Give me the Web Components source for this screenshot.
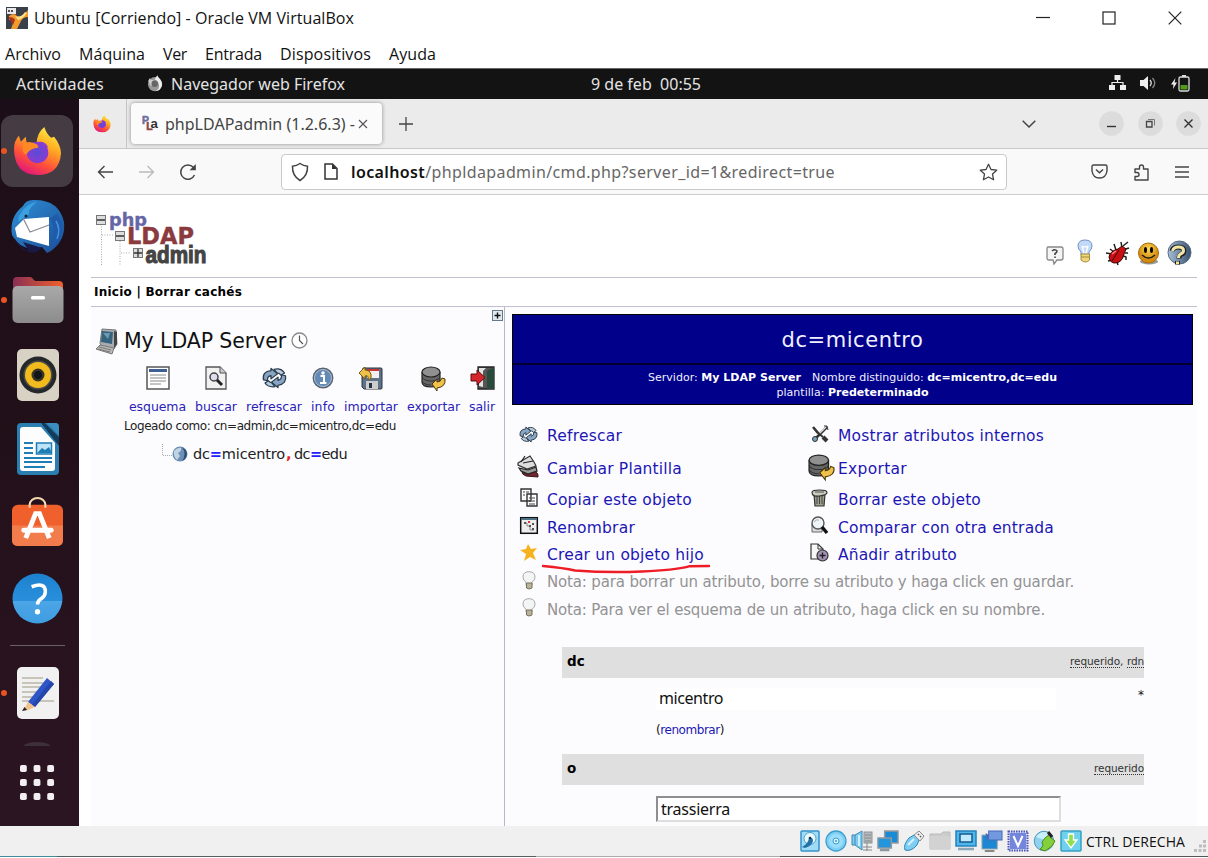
<!DOCTYPE html>
<html lang="es">
<head>
<meta charset="utf-8">
<title>Ubuntu [Corriendo] - Oracle VM VirtualBox</title>
<style>
html,body{margin:0;padding:0;background:#fff;overflow:hidden}
</style>
</head>
<body>
<vm-window></vm-window>
<script>
const ICONS = {
vbox:['0 0 22 22',`<rect width="22" height="22" fill="#39404a"/><path d="M3 9q5-4 8 0t11-6v7q-5 0-7 4t-4 8H5q2-6 3-8t-5-1z" fill="#f29a2e"/><path d="M9 9q6 2 10-4l2 1q-4 6-9 7z" fill="#fde08a"/><path d="M2 10q6 0 7 3l-2 5z" fill="#a9331d"/><rect x="1" y="1" width="9" height="6" fill="#e8e8ea"/><path d="M2 3h2v2H2zM5 3h2v2H5z" fill="#555"/>`],
min:['0 0 14 14','<path d="M0 6.500h14" stroke="#222" stroke-width="1.200"/>'],
max:['0 0 14 14','<rect x="1" y="1" width="12" height="12" fill="none" stroke="#222" stroke-width="1.2"/>'],
close:['0 0 14 14','<path d="M.7.7l12.6 12.6M13.3.7.7 13.3" stroke="#222" stroke-width="1.2"/>'],
foxgray:['0 0 50 52',`<circle cx="25" cy="28" r="22" fill="#999"/><path d="M4 18 8 10l5 5h8l-4 8q6 0 4 6-4 9-12 1z" fill="#ccc"/><path d="M24 14 32 1q3 7 9 12 10 12 4 24-6 12-18 12 14-7 10-21-4-12-13-14z" fill="#eee"/><circle cx="24" cy="27" r="10" fill="#666"/>`],
firefox:['0 0 50 52',`<defs><linearGradient id="f1" x1=".8" y1="0" x2=".3" y2="1"><stop offset="0" stop-color="#fff04a"/><stop offset=".35" stop-color="#ffae22"/><stop offset=".7" stop-color="#ff4f3a"/><stop offset="1" stop-color="#e0157d"/></linearGradient><radialGradient id="f2"><stop offset="0" stop-color="#5a4bd8"/><stop offset="1" stop-color="#8a3bd0"/></radialGradient></defs><path d="M1 24Q1 15 6 10l2 6 5-5 1 7 10 1Q24 7 32 1q2 7 7 11l3-1q7 9 7 17-2 22-24 22Q2 50 1 24z" fill="url(#f1)"/><circle cx="25" cy="27" r="11" fill="url(#f2)"/><path d="M10 18q7-4 15 1l1 3q-8 1-11 5-2 4-5-1z" fill="#ff8a25"/><path d="M24 17q8-3 12 5l-5-1z" fill="#8a3bd0"/>`],
pla:['0 0 18 20',`<g font-family="Liberation Sans" font-weight="bold"><text x="0" y="10.500" font-size="11" fill="#6d6d9e" stroke="#6d6d9e" stroke-width=".6">P</text><text x="4.500" y="17" font-size="11" fill="#8d4545" stroke="#8d4545" stroke-width=".6">L</text><text x="9" y="15" font-size="14" fill="#333">a</text></g>`],
x:['0 0 10 10','<path d="M1 1l8 8M9 1 1 9" stroke="#555" stroke-width="1.1"/>'],
plus:['0 0 14 14','<path d="M7 0v14M0 7h14" stroke="#444" stroke-width="1.3"/>'],
chev:['0 0 14 8','<path d="M.7.7 7 7 13.3.7" fill="none" stroke="#444" stroke-width="1.5"/>'],
wmin:['0 0 25 25','<circle cx="12.5" cy="12.5" r="12.3" fill="#dcdcdc"/><path d="M8 15.500h9" stroke="#333" stroke-width="1.400"/>'],
wmax:['0 0 25 25','<circle cx="12.500" cy="12.500" r="12.300" fill="#dcdcdc"/><path d="M8.500 10.500h5.500v5.500h-5.500z" fill="none" stroke="#444" stroke-width="1.300"/><path d="M10 8.500h6.500v6" fill="none" stroke="#777"/>'],
wclose:['0 0 25 25','<circle cx="12.5" cy="12.5" r="12.3" fill="#dcdcdc"/><path d="M8.5 8.5l8 8M16.5 8.5l-8 8" stroke="#333" stroke-width="1.4"/>'],
back:['0 0 17 14','<path d="M16 7H1.5M7.5 1l-6 6 6 6" fill="none" stroke="#444" stroke-width="1.4"/>'],
fwd:['0 0 17 14','<path d="M1 7h14.5M9.500 1l6 6-6 6" fill="none" stroke="#bbb" stroke-width="1.4"/>'],
reload:['0 0 18 18','<path d="M15.500 12A7.200 7.200 0 1 1 14.300 4.300L16 6" fill="none" stroke="#444" stroke-width="1.5"/><path d="M16.800 1v6.200h-6.200z" fill="#444"/>'],
shield:['0 0 18 20','<path d="M9 1.500Q12.500 4 16.500 4.200 17 13.500 9 18.500 1 13.500 1.500 4.200 5.500 4 9 1.500z" fill="none" stroke="#444" stroke-width="1.5"/>'],
page:['0 0 14 17','<path d="M1 1h7.500l4.500 4.500V16H1z" fill="none" stroke="#333" stroke-width="1.500"/><path d="M8 1l5 5H8z" fill="#333"/>'],
star:['0 0 19 18','<path d="M9.500 1.300l2.500 5.200 5.700.7-4.200 3.900 1.100 5.700-5.100-2.800-5.100 2.800 1.100-5.700L1.300 7.200 7 6.500z" fill="none" stroke="#444" stroke-width="1.300" stroke-linejoin="round"/>'],
pocket:['0 0 17 15','<path d="M2.500 1h12q1.500 0 1.500 1.500V7q-1 7-7.500 7T1 7V2.500Q1 1 2.500 1z" fill="none" stroke="#444" stroke-width="1.400"/><path d="M5 5.500l3.500 3.300L12 5.500" fill="none" stroke="#444" stroke-width="1.500"/>'],
ext:['0 0 17 18','<path d="M2 6h4.500V4a2 2 0 0 1 4 0v2H15v11H2v-3.500h2a2 2 0 0 0 0-4H2z" fill="none" stroke="#444" stroke-width="1.400" stroke-linejoin="round"/>'],
burger:['0 0 14 12','<path d="M0 1h14M0 6h14M0 11h14" stroke="#444" stroke-width="1.400"/>'],
net:['0 0 17 16','<path d="M5.500 0h6v5h-6zM0 10h6v5H0zM11 10h6v5h-6z" fill="#eee"/><path d="M8.500 5v3M3 10V7.500h11V10" fill="none" stroke="#eee" stroke-width="1.200"/>'],
vol:['0 0 17 16','<path d="M0 5h3.500L8 1v14l-4.500-4H0z" fill="#eee"/><path d="M10 5q2.500 3 0 6" fill="none" stroke="#ddd" stroke-width="1.300"/><path d="M12.500 3q4.500 5 0 10" fill="none" stroke="#888" stroke-width="1.300"/>'],
batt:['0 0 19 17','<path d="M4.500 3 0 9.500h2.500L2 14l4-6.500H3.500z" fill="#eee"/><rect x="8" y="2" width="10" height="14" rx="1.500" fill="none" stroke="#ddd" stroke-width="1.300"/><path d="M11 0h4v2h-4z" fill="#ddd"/><path d="M9.500 10h7v4.500h-7z" fill="#4e9a1c"/>'],
tbird:['0 0 54 54',`<defs><linearGradient id="t1" x1="0" y1="0" x2="1" y2="1"><stop offset="0" stop-color="#2f8fd6"/><stop offset="1" stop-color="#1b4d96"/></linearGradient></defs><path d="M1 36Q-2 18 12 7 15 0 24 1q24 0 29 22 2 18-13 29l-4 2-5-6q-20 6-30-12z" fill="url(#t1)"/><path d="M4 29l9-9 25-2v29L6 38z" fill="#fff"/><path d="M12 19l7 14 19-7" fill="none" stroke="#8a8a90" stroke-width="1.200"/><path d="M10 14Q16 4 26 3q-9 6-8 12-6 3-10 8-2-4 2-9z" fill="#3aa0e0"/><path d="M3 38q5 10 15 14l-6-9 19 6q-6 6-13 4Q6 49 3 38z" fill="#191a45"/><path d="M38 20q8 6 2 28l10-10q4-13-4-23z" fill="#1e5bab"/><path d="M45 22q5 8 1 18" fill="none" stroke="#3f94da" stroke-width="1.500"/><circle cx="15" cy="17" r="1.500" fill="#123"/>`],
files:['0 0 52 48',`<defs><linearGradient id="g1"><stop offset="0" stop-color="#8a2f55"/><stop offset="1" stop-color="#f0612c"/></linearGradient><linearGradient id="g2" x1="0" y1="0" x2="0" y2="1"><stop offset="0" stop-color="#a9a9a9"/><stop offset="1" stop-color="#8c8c8c"/></linearGradient></defs><path d="M5 1h13q2 0 3 2l2 2h24q4 0 4 4v15H1V5q0-4 4-4z" fill="url(#g1)"/><rect x=".5" y="10" width="51" height="37" rx="5" fill="url(#g2)"/><rect x="19" y="20" width="14" height="3.500" rx="1.500" fill="#fff"/>`],
rhythm:['0 0 42 52',`<rect width="42" height="52" rx="5" fill="#d8d2c4"/><circle cx="21" cy="26" r="18.500" fill="#25282b"/><circle cx="21" cy="26" r="14.500" fill="#4a4a48"/><circle cx="21" cy="26" r="13" fill="#f2bb1d"/><circle cx="21" cy="26" r="6.500" fill="#3a3424"/><circle cx="21" cy="26" r="4" fill="#10151c"/>`],
writer:['0 0 42 52',`<rect width="42" height="52" rx="4" fill="#2a7fb0"/><path d="M3 7q0-3 3-3h18l14 16v25q0 3-3 3H6q-3 0-3-3z" fill="#fdfdfd"/><path d="M24 0h4l14 14v9z" fill="#113c5c"/><path d="M30 0h8q4 0 4 4v8z" fill="#3a8fc0"/><path d="M7 20h9M7 25h9M7 30h9M7 35h28M7 39h28M7 44h21" stroke="#1e7db4" stroke-width="2"/><rect x="19.500" y="20" width="15" height="11" fill="#bfe3f6" stroke="#1e7db4" stroke-width="1.500"/><path d="M20 30l5-5 3 2 4-3 3 6z" fill="#1e7db4"/>`],
soft:['0 0 52 50',`<rect y="8" width="52" height="42" rx="6" fill="#f0602c"/><path d="M0 29h52v15q0 6-6 6H6q-6 0-6-6z" fill="#f37c4c"/><path d="M18 11V8a8 7 0 0 1 16 0v3" fill="none" stroke="#f3d8b0" stroke-width="2.200"/><path d="M14 42 24 17h4l10 25" fill="none" stroke="#fff" stroke-width="5"/><path d="M12 34h28" stroke="#fff" stroke-width="5" stroke-linecap="round"/>`],
help:['0 0 52 52',`<defs><linearGradient id="h1" x1="0" y1="0" x2="0" y2="1"><stop offset="0" stop-color="#1c82d0"/><stop offset=".54" stop-color="#2a8fdb"/><stop offset=".55" stop-color="#4ba5e6"/><stop offset="1" stop-color="#3f9de2"/></linearGradient></defs><circle cx="26" cy="26" r="25.500" fill="url(#h1)"/><path d="M20 14q14-5 14 5 0 4-4 7-4 2.500-4 6" fill="none" stroke="#fff" stroke-width="3.600"/><circle cx="26" cy="39.500" r="2.700" fill="#fff"/>`],
editor:['0 0 42 52',`<rect width="42" height="52" rx="5" fill="#f1f1f1"/><path d="M5 11h21M5 16h22M5 20h20M5 25h16M5 30h11M5 34h32" stroke="#c9c4b8" stroke-width="1.800"/><path d="M11 35 30 11l7 6-19 23z" fill="#2f56c8"/><path d="M15 38 34 14l3 3-19 23z" fill="#2547ab"/><path d="M11 35l7 5-10 4z" fill="#f1c38b"/><path d="M11 35l2 7-7 2z" fill="#f1c38b"/><path d="M7.500 40 5 44l5-1z" fill="#222"/>`],
apps:['0 0 36 36',[0,14,28].map(y=>[0,14,28].map(x=>`<rect x="${x}" y="${y}" width="7" height="7" rx="1.800" fill="#f2eef1"/>`).join('')).join('')],
logo:['0 0 116 64',`<path d="M6.500 15v41M25 32v24M7 26h12M26 44h10" stroke="#aaa" stroke-dasharray="1 1.500" fill="none"/><g fill="#ddd" stroke="#777"><rect x="1.500" y="6.500" width="9" height="9"/><rect x="20.500" y="22.500" width="9" height="9"/><rect x="38.500" y="39.500" width="9" height="9"/></g><path d="M2 11h8M21 27h8M39 44h8M43 40v8" stroke="#333" stroke-width="1.300"/><g font-weight="bold"><text x="14" y="16.500" font-family="DejaVu Sans" font-size="18.500" textLength="38" lengthAdjust="spacingAndGlyphs" fill="#6666a6" stroke="#6666a6" stroke-width=".4">php</text><text x="32" y="35" font-family="DejaVu Sans" font-size="23.500" textLength="67" lengthAdjust="spacingAndGlyphs" fill="#8b3a3e" stroke="#8b3a3e" stroke-width=".4">LDAP</text><text x="50.500" y="54" font-family="Liberation Sans" font-size="24" textLength="61" lengthAdjust="spacingAndGlyphs" fill="#444" stroke="#444" stroke-width="1.100">admin</text></g>`],
req:['0 0 18 20','<path d="M2 1h13q2 0 2 2v9q0 2-2 2h-4l-3 4-1-4H3q-2 0-2-2V3q0-2 1-2z" fill="#f4f4f4" stroke="#888" stroke-width="1.300"/><path d="M6 5q3-2.500 5 0 0 2-2 2.500v1.500M9 10.500v1.500" fill="none" stroke="#444" stroke-width="1.600"/>'],
bulb:['0 0 16 25','<path d="M8 1q7 0 7 6 0 3-3 6v3H4v-3Q1 10 1 7q0-6 7-6z" fill="#c2daf8" stroke="#7191c4"/><path d="M5 7l2 7M11 7l-2 7M5 7q3 2 6 0" stroke="#fff" fill="none" stroke-width="1.400"/><path d="M4 15h8.500v6q-4 4-8.500 0z" fill="#eed77c" stroke="#a78a3a"/><path d="M4 18h8" stroke="#a78a3a"/>'],
bug:['0 0 25 25','<path d="M1 12l6 1M3 20l5-1 1 3M9 3l2 6M16 1l1 6M18 5l5-4M17 9l7-2M16 14l5 2v3M12 21l1 3M5 8l4 3M20 12h3" stroke="#222" stroke-width="1.500" fill="none"/><path d="M4 16q1-6 9-8l4-3 4 3-2 5q-2 9-9 9-5 0-6-6z" fill="#c80f14" stroke="#3a0306"/><path d="M14 9l-7 11" stroke="#3a0306"/><path d="M7 13l4-3" stroke="#ff8080" stroke-width="1.500"/>'],
smile:['0 0 23 23','<defs><radialGradient id="s1" cy=".3"><stop offset="0" stop-color="#ffd84f"/><stop offset="1" stop-color="#d58b10"/></radialGradient></defs><ellipse cx="12" cy="19.500" rx="9" ry="3" fill="#999"/><circle cx="11.500" cy="11" r="10" fill="url(#s1)" stroke="#a56c10"/><ellipse cx="8.500" cy="8" rx="1.500" ry="3"/><ellipse cx="14.500" cy="8" rx="1.500" ry="3"/><path d="M5 13q6.500 6 13 0" stroke="#222" stroke-width="1.500" fill="none"/>'],
qhelp:['0 0 25 26','<defs><linearGradient id="q1"><stop offset="0" stop-color="#a8bfd9"/><stop offset="1" stop-color="#38506e"/></linearGradient></defs><circle cx="12.500" cy="12.500" r="11.500" fill="url(#q1)" stroke="#566b84"/><path d="M5 11q1-4 6.500-4t5.500 4q0 2.500-3 3.500-2 1-2 4M10.500 21v3.500" fill="none" stroke="#222" stroke-width="5"/><path d="M5.500 11q1-4 6-4t5 3.500q0 2.500-3 3.500-2 1-2 4M10.500 21.500v2.500" fill="none" stroke="#f1e7a8" stroke-width="3"/>'],
exp:['0 0 11 11','<rect x=".5" y=".5" width="10" height="10" fill="#dfe9ee" stroke="#68798a"/><path d="M5.500 2.500v6M2.500 5.500h6" stroke="#111" stroke-width="1.400"/>'],
pc:['0 0 24 27','<path d="M7 1l14 1 1 14-3 5-13-3-1-3z" fill="#a9adb0" stroke="#777"/><path d="M7 3l11 1-1 12-11-2z" fill="#35627d"/><path d="M8 5l7 0-2 6z" fill="#6d9ab1"/><path d="M19 3l3 1v12l-3 4z" fill="#444"/><path d="M5 17l14 3-2 6L1 21z" fill="#b9bab7" stroke="#777"/><path d="M4 19l12 3M3 21l12 3" stroke="#777"/>'],
clock:['0 0 17 17','<circle cx="8.500" cy="8.500" r="7.500" fill="#fff" stroke="#888" stroke-width="1.300"/><path d="M8.500 3.500v5l3.500 3.500" stroke="#555" fill="none" stroke-width="1.200"/>'],
schema:['0 0 24 24','<rect x="1" y="1" width="22" height="22" fill="#fff" stroke="#555" stroke-width="1.500"/><path d="M3 4.500h18" stroke="#3d5f96" stroke-width="3"/><path d="M4 9h16M4 12h16M4 15h16M4 18h11" stroke="#888"/>'],
search:['0 0 22 24','<path d="M1 1h14l6 6v16H1z" fill="#f1f1f1" stroke="#555" stroke-width="1.300"/><path d="M15 1v6h6" fill="#ccc" stroke="#555"/><circle cx="9" cy="11" r="4" fill="#dde" stroke="#444" stroke-width="1.500"/><path d="M12 14l5 5" stroke="#222" stroke-width="3"/>'],
refresh:['0 0 25 24','<g fill="#88a5c3" stroke="#2a3b4d" stroke-width="1.300" stroke-linejoin="round"><path d="M1.500 14Q0 5 9 4V1.500l6.500 6L9 13v-3.500Q5 10 5.500 15z"/><path d="M23.500 9.500q1.500 9-7.500 10.500v2.500l-6.500-6L16 11v3.500q4-.5 3.500-6z"/><path d="M12 2.500q7-2 10.500 4l-3.500 2.500q-1.500-2.500-4-2.500zM13 21.500q-7 1-10-4l3.500-2.500q1.500 2 3.500 2.500z" fill="#b9cbdc"/></g>'],
info:['0 0 22 22','<circle cx="11" cy="11" r="9.700" fill="#6489b5" stroke="#5d646d" stroke-width="1.500"/><circle cx="11" cy="11" r="8.500" fill="none" stroke="#a6bed9"/><circle cx="11" cy="6" r="1.700" fill="#fff"/><path d="M8.500 9h3.500v7M8 16h6.500" stroke="#fff" stroke-width="2" fill="none"/>'],
imp:['0 0 24 24','<path d="M4 2h18q1 0 1 1v19q0 1-1 1H5l-2-2V8z" fill="#5d7288" stroke="#2b3440"/><rect x="8" y="3" width="12" height="9" fill="#f5eeee"/><path d="M8 4h12" stroke="#c33" stroke-width="2"/><rect x="7" y="15" width="12" height="8" fill="#ccc"/><rect x="10" y="17" width="3" height="5" fill="#234"/><path d="M0 7 6 1v3q7 0 6 8-1 2-3 1 1-4-3-3v3z" fill="#edc04a" stroke="#7a5910"/>'],
db:['0 0 25 25','<path d="M1 6v10q0 5 9 5t9-5V6" fill="#666" stroke="#222" stroke-width="1.200"/><ellipse cx="10" cy="6" rx="9" ry="5" fill="#909090" stroke="#222" stroke-width="1.200"/><path d="M1 11q2 4 9 4t9-4M1 15q2 4 9 4" stroke="#333" fill="none"/><path d="M11 18l5-5v3q4 0 5-4l3 1q1 8-8 9v3z" fill="#f0c24a" stroke="#4a3508"/>'],
exit:['0 0 25 24','<path d="M8 1h16v22H8z" fill="#555" stroke="#222" stroke-width="1.300"/><path d="M17 5l7-4v22h-7z" fill="#294a3b"/><path d="M9 2h7l-3 3v16l-4-1z" fill="#e2e2e2"/><path d="M1 8h6V4l8 7.500L7 19v-4H1z" fill="#d3252b" stroke="#5d0b0e"/>'],
globe:['0 0 16 16','<circle cx="8" cy="8" r="7.500" fill="#6c8fb5"/><path d="M2 5q4-4 7-3 1 3-3 5l2 3-3 4q-4-4-3-9z" fill="#c1d4e3"/><path d="M10 1q8 5 3 12l-3 2q5-7 0-14z" fill="#304d70"/>'],
tree:['0 0 10 12','<path d="M.5 0v11.500H10" fill="none" stroke="#aaa" stroke-dasharray="1 1"/>'],
tools:['0 0 18 18','<path d="M2 2l5 6M16 2 4 14" stroke="#333" stroke-width="2.600"/><path d="M12 12l4 4" stroke="#333" stroke-width="4"/><path d="M15 2 8 9" stroke="#ddd" stroke-width="1.200"/><circle cx="4" cy="14" r="2.500" fill="#79a1bb" stroke="#333"/><path d="M6 7l6 5" stroke="#333" stroke-width="2"/><path d="M13 1h3l1 4" fill="none" stroke="#333"/>'],
swiss:['0 0 23 24','<path d="M5 16h13q4 3 3 6l-12-1q-5-2-4-5z" fill="#742532" stroke="#3a141c"/><path d="M1 8 13 1l4 6 2 4-9 3-9-4z" fill="#ddd" stroke="#333" stroke-width="1.200"/><path d="M2 13l9 2 8-3 1 4-9 3-7-3zM6 8l10-2M8 1l-4 6" fill="#999" stroke="#222" stroke-width="1.200"/>'],
copy:['0 0 18 19','<path d="M1 1h10v12H1zM7 6h10v12H7z" fill="#fff" stroke="#333" stroke-width="1.400"/><path d="M3 4h2M6 4h3M3 7h2M9 10h2M12 10h3M9 13h2M12 13h3M9 16h6" stroke="#444" stroke-width="1.200"/>'],
ren:['0 0 18 17','<rect x=".7" y=".7" width="16.600" height="15.600" fill="#eee" stroke="#111" stroke-width="1.500"/><path d="M1 2h16" stroke="#4d7186" stroke-width="2"/><path d="M5 6h2M7 6v3h3v4h4" stroke="#888" fill="none"/><path d="M4 5h2v2H4zM9 8h2v2H9zM12 6h2v2h-2zM12 11h2v2h-2z" fill="#555"/><path d="M8 4h2v2H8z" fill="#d33"/>'],
gold:['0 0 18 17','<path d="M8 0l3 5 6-1-4 5 3 7-6-3-6 4 2-7-6-4 6-1z" fill="#f6b31f"/>'],
lamp:['0 0 14 19','<path d="M7 .7q6 0 6 5.500 0 3-3 5v3H4v-3Q1 9.500 1 6q0-5.300 6-5.300z" fill="#f3f4f4" stroke="#aaa"/><path d="M4.500 12h5.500v5q-3 2-5.500 0z" fill="#b8b39a" stroke="#77705a"/>'],
trash:['0 0 17 18','<path d="M3 5h11l-1 12H4z" fill="#9da08f" stroke="#333" stroke-width="1.200"/><path d="M6 7v8M8.500 7v8M11 7v8" stroke="#444"/><path d="M1 3.500Q1 1 8.500 1T16 3.500 8.500 7 1 3.500z" fill="#c9cbbc" stroke="#333" stroke-width="1.200"/><path d="M4 3h9" stroke="#555"/>'],
cmp:['0 0 19 19','<path d="M2 8h10v8H2z" fill="#ddd" stroke="#666"/><circle cx="8" cy="7" r="6" fill="#eef4f8" stroke="#555" stroke-width="1.400"/><path d="M4 6q2-3 5-2" stroke="#aaa" fill="none"/><path d="M12 11l5 6" stroke="#111" stroke-width="3.400"/>'],
add:['0 0 19 19','<path d="M1 1h7l5 5v10H1z" fill="#f7f7f7" stroke="#333" stroke-width="1.200"/><path d="M8 1v5h5" fill="none" stroke="#333"/><circle cx="12.500" cy="12.500" r="5.500" fill="#a391b4" stroke="#333" stroke-width="1.200"/><path d="M12.500 9.500v6M9.500 12.500h6" stroke="#222" stroke-width="1.400"/>'],
hdd:['0 0 22 22','<rect x="2" y="1" width="18" height="20" rx="1" fill="#9fdcf8" stroke="#3391c9" stroke-width="1.500"/><circle cx="11" cy="8.500" r="6" fill="#e7f8ff" stroke="#4d9fc9"/><path d="M10 8q4-1 4 3-1 5-8 7l-3-1q6-3 7-9z" fill="#2670a8"/><circle cx="11" cy="8" r="1.300" fill="#134"/>'],
cd:['0 0 22 22','<circle cx="11" cy="11" r="10" fill="#7fd0f5" stroke="#3d9ecf" stroke-width="1.300"/><circle cx="11" cy="11" r="7" fill="#9cdef9"/><circle cx="11" cy="11" r="3" fill="#d8f2fd" stroke="#3d9ecf"/><circle cx="11" cy="11" r="1" fill="#3d9ecf"/>'],
aud:['0 0 22 22','<rect x="13" y="2" width="8" height="11" fill="#b4b9bc" stroke="#8d9499"/><path d="M14 5h6M14 8h6M14 11h6M12 17h9M12 20h9M16 13v8" stroke="#888"/><path d="M1 5h3L11 1v19l-7-5H1z" fill="#7cccf2" stroke="#3e89b5"/><path d="M4 5v10" stroke="#3e89b5"/><path d="M8 5v11" stroke="#cdeefd" stroke-width="2"/>'],
net2:['0 0 23 22','<path d="M8 1h14v12H8z" fill="#1b8ad4" stroke="#999" stroke-width="1.500"/><path d="M1 8h14v10H1z" fill="#2395dd" stroke="#8f989e" stroke-width="1.500"/><path d="M3 20h10" stroke="#8f989e" stroke-width="2.500"/>'],
usb:['0 0 22 22','<path d="M2 20q-2-5 4-12l5-3 5 5-2 5Q8 22 2 20z" fill="#7fcdf2" stroke="#2d88b7"/><path d="M11 5l5-4 5 5-4 5z" fill="#eee" stroke="#888"/><path d="M15 4l1 1M18 6l-1 1" stroke="#555" stroke-width="1.500"/><path d="M5 15l6-6" stroke="#d9f3ff" stroke-width="2"/>'],
folder:['0 0 22 22','<path d="M1 4h11l2-2h7v17H1z" fill="#ccc" stroke="#bbb"/><path d="M1 6h20v13H1z" fill="#d2d2d2"/>'],
disp:['0 0 22 22','<rect x="1" y="1" width="20" height="15" fill="#4eb7ee" stroke="#2381bb" stroke-width="1.500"/><rect x="5" y="4" width="12" height="8" fill="#bfe9ff" stroke="#165b8a" stroke-width="1.500"/><path d="M3 19h16" stroke="#8ba7b8" stroke-width="2.500"/>'],
rec:['0 0 23 22','<path d="M1 5h16v14H1z" fill="#1e87d4" stroke="#9aa"/><path d="M4 21h10" stroke="#888" stroke-width="2"/><rect x="8" y="1" width="14" height="9" fill="#7298e0" stroke="#4b69b8"/><path d="M5 3l3 2v3L5 9z" fill="#4b69b8"/>'],
cpu:['0 0 22 22','<rect x="1.500" y="1.500" width="19" height="19" fill="#d7dcff" stroke="#4b55b0" stroke-width="2" stroke-dasharray="1.500 1"/><rect x="3" y="3" width="16" height="16" fill="#7486dc"/><path d="M6.500 6 11 16l4.500-10" fill="none" stroke="#fff" stroke-width="2"/>'],
mouse:['0 0 23 22','<circle cx="11" cy="11" r="9.700" fill="#8fd2ef" stroke="#4d96b6"/><path d="M3 7q5-7 13-4l-4 7z" fill="#c9effc"/><path d="M12 8l5-4 1 4 4 3-3 5-7 5-5-2 3-3-1-4z" fill="#86cf3c" stroke="#498f1a"/><path d="M15 2l4 5" stroke="#222" stroke-width="3"/>'],
kbd:['0 0 22 22','<rect x="1" y="1" width="20" height="20" rx="1" fill="#6fd1ee" stroke="#3aa0c4" stroke-width="1.500"/><path d="M8.500 4h5v6H17l-6 8-6-8h3.500z" fill="#8ee04a" stroke="#fff" stroke-width="1.300"/>'],
grip:['0 0 12 12','<path d="M9 0h3v3H9zM5 4.500h3v3H5zM9 4.500h3v3H9zM0 9h3v3H0zM4.500 9h3v3h-3zM9 9h3v3H9z" fill="#bdbdbd"/>'],
stroke:['0 0 168 10','<path d="M1 2Q22 4 33 6.500 66 9 100 7.500 132 6 147 2.300L167 2" fill="none" stroke="#ee1c24" stroke-width="2.400" stroke-linecap="round"/>']
};
const fits = [];
class SvgIcon extends HTMLElement{
  connectedCallback(){
    if(this.shadowRoot) return;
    const [vb,body]=ICONS[this.getAttribute('name')];
    const w=this.getAttribute('w')||vb.split(' ')[2], h=this.getAttribute('h')||vb.split(' ')[3];
    this.attachShadow({mode:'open'}).innerHTML=`<style>:host{display:block;flex:none;width:${w}px;height:${h}px}svg{display:block;overflow:visible}</style><svg width="${w}" height="${h}" viewBox="${vb}" preserveAspectRatio="none" aria-hidden="true">${body}</svg>`;
  }
}
/* Single-line label that spreads its glyphs evenly over a given width. */
class FitText extends HTMLElement{
  connectedCallback(){
    if(this.shadowRoot) return;
    const w=this.getAttribute('w');
    this.attachShadow({mode:'open'}).innerHTML=`<style>:host{display:block;flex:none;width:${w}px;white-space:pre}span{display:inline-block}</style><span><slot></slot></span>`;
    fits.push(this);
  }
  fit(){
    const s=this.shadowRoot.querySelector('span'), n=this.textContent.length;
    const d=(this.getAttribute('w')-s.getBoundingClientRect().width)/n;
    this.style.letterSpacing=d.toFixed(3)+'px';
  }
}
function define(name,html){
  const t=document.createElement('template');t.innerHTML=html;
  customElements.define(name,class extends HTMLElement{
    connectedCallback(){
      if(this.shadowRoot) return;
      this.attachShadow({mode:'open'}).append(t.content.cloneNode(true));
    }
  });
}
customElements.define('svg-icon',SvgIcon);
customElements.define('fit-text',FitText);

define('title-bar',`<style>:host{display:flex;height:36px;align-items:center;box-sizing:border-box;padding:0 26px 0 6px;font:16px "Open Sans",sans-serif;color:#111}
fit-text{margin-left:6px}.b{display:flex;margin-left:auto;gap:52px}</style>
<svg-icon name="vbox"></svg-icon><fit-text w="320">Ubuntu [Corriendo] - Oracle VM VirtualBox</fit-text>
<div class="b"><svg-icon name="min"></svg-icon><svg-icon name="max"></svg-icon><svg-icon name="close"></svg-icon></div>`);

define('menu-bar',`<style>:host{display:flex;height:32px;align-items:center;padding:4px 5px 0;box-sizing:border-box;gap:18px;font:16px "Open Sans",sans-serif;color:#111}</style>
<fit-text w="56">Archivo</fit-text><fit-text w="66">Máquina</fit-text><fit-text w="24">Ver</fit-text><fit-text w="57">Entrada</fit-text><fit-text w="91">Dispositivos</fit-text><fit-text w="47">Ayuda</fit-text>`);

define('top-panel',`<style>:host{display:grid;grid-template-columns:591px 1fr auto;height:31px;align-items:center;background:#131313;border-top:1px solid #666;box-sizing:border-box;font:16px "Noto Sans",sans-serif;color:#e4e4e4;padding-right:18px}
div{display:flex;align-items:center}.l{padding-left:16px}.l svg-icon{margin:-2px 8px 0 43px}.r{gap:14px;margin-top:-2px}</style>
<div class="l"><fit-text w="88">Actividades</fit-text><svg-icon name="foxgray" w="16" h="17"></svg-icon><fit-text w="174">Navegador web Firefox</fit-text></div>
<div><fit-text w="110">9 de feb  00:55</fit-text></div>
<div class="r"><svg-icon name="net"></svg-icon><svg-icon name="vol"></svg-icon><svg-icon name="batt"></svg-icon></div>`);

define('dock-item',`<style>:host{display:flex;position:relative;width:75px;height:74.500px;align-items:center;justify-content:center}
:host([active])::before{content:"";position:absolute;z-index:0;left:1px;top:1px;width:72px;height:72px;border-radius:12px;background:#453b43}
:host([running])::after{content:"";position:absolute;left:1px;top:34px;width:6px;height:6px;border-radius:50%;background:#e95420}
::slotted(*){position:relative}</style><slot></slot>`);

define('app-dock',`<style>:host{display:flex;flex-direction:column;width:79px;flex:none;background:linear-gradient(#1c0e19,#221019 45%,#2c1523);box-sizing:border-box;padding-top:15px;overflow:hidden}
.s{width:55px;height:1px;margin:9px 0 10px 10px;background:#6c5f68}.c{width:26px;height:4px;margin:12px 0 19px 24px;border-radius:50% 50% 0 0/100% 100% 0 0;background:#3d3039}.a{margin-left:20px}.up{margin-bottom:5px}</style>
<dock-item active running><svg-icon name="firefox" w="49" h="51"></svg-icon></dock-item>
<dock-item><svg-icon name="tbird"></svg-icon></dock-item>
<dock-item running><svg-icon name="files"></svg-icon></dock-item>
<dock-item><svg-icon name="rhythm"></svg-icon></dock-item>
<dock-item><svg-icon name="writer"></svg-icon></dock-item>
<dock-item><svg-icon class="up" name="soft" w="51" h="49"></svg-icon></dock-item>
<dock-item><svg-icon name="help" w="51" h="51"></svg-icon></dock-item>
<div class="s"></div>
<dock-item running><svg-icon name="editor"></svg-icon></dock-item>
<div class="c"></div><svg-icon class="a" name="apps" w="35" h="36"></svg-icon>`);

define('tab-strip',`<style>:host{display:flex;height:50px;flex:none;align-items:center;background:#ebebeb;border-bottom:1px solid #c8c8c8;box-sizing:border-box;font:16px "Noto Sans",sans-serif;color:#444}
.p{width:48px;height:49px;box-sizing:border-box;border-right:1px solid #c6c6c6;display:flex;align-items:center;padding-left:14px}
.t{width:251px;height:41px;margin:0 17px 0 4px;background:#fbfbfb;border-radius:4px;box-shadow:0 0 4px rgba(0,0,0,.4);display:flex;align-items:center;box-sizing:border-box;padding-left:11px}
.t fit-text{margin:0 3px 0 6px}.r{display:flex;align-items:center;margin:0 7px 0 auto;gap:13.500px}.r :first-child{margin-right:50px}</style>
<div class="p"><svg-icon name="firefox" w="18" h="18"></svg-icon></div>
<div class="t"><svg-icon name="pla" w="17" h="19"></svg-icon><fit-text w="190">phpLDAPadmin (1.2.6.3) -</fit-text><svg-icon name="x"></svg-icon></div>
<svg-icon name="plus"></svg-icon>
<div class="r"><svg-icon name="chev"></svg-icon><svg-icon name="wmin"></svg-icon><svg-icon name="wmax"></svg-icon><svg-icon name="wclose"></svg-icon></div>`);

define('nav-bar',`<style>:host{display:flex;height:46px;flex:none;align-items:center;background:#f9f9fa;border-bottom:1px solid #ccc;box-sizing:border-box;padding:0 19px 0 18px;font:16px "Noto Sans",sans-serif;color:#666}
.b{display:flex;gap:24px;align-items:center}.u{display:flex;align-items:center;box-sizing:border-box;width:726px;height:36px;margin:0 auto 0 84px;border:1px solid #c9c9cc;border-radius:4px;background:#fff;padding:0 8px 0 9px}
b{color:#111;font-weight:600}.u fit-text{margin:0 auto 0 13px}.r{display:flex;gap:25px;align-items:center}.p{margin-left:15px}</style>
<div class="b"><svg-icon name="back"></svg-icon><svg-icon name="fwd"></svg-icon><svg-icon name="reload"></svg-icon></div>
<div class="u"><svg-icon name="shield"></svg-icon><svg-icon class="p" name="page"></svg-icon><fit-text w="484"><b>localhost</b>/phpldapadmin/cmd.php?server_id=1&amp;redirect=true</fit-text><svg-icon name="star"></svg-icon></div>
<div class="r"><svg-icon name="pocket"></svg-icon><svg-icon name="ext"></svg-icon><svg-icon name="burger"></svg-icon></div>`);

define('page-header',`<style>:host{display:block;margin:0 11px 0 12px;font:bold 12px "DejaVu Sans",sans-serif;color:#000}
.h{display:flex;height:82px;box-sizing:content-box;border-bottom:1px solid #c0c0cf;padding-left:4px}.h>:first-child{margin-top:14px}
.i{display:flex;align-items:center;gap:7px;margin:33px 5px 0 auto;height:50px}.i :first-child{margin-top:5px;margin-right:2px}.i :nth-child(2){margin:-3px 5px 0 4px}</style>
<style>.m{display:flex;align-items:center;height:28px;border-bottom:1px solid #c0c0cf;padding-left:3px}</style>
<div class="h"><svg-icon name="logo"></svg-icon><div class="i"><svg-icon name="req"></svg-icon><svg-icon name="bulb"></svg-icon><svg-icon name="bug"></svg-icon><svg-icon name="smile"></svg-icon><svg-icon name="qhelp"></svg-icon></div></div>
<div class="m"><fit-text w="148">Inicio | Borrar cachés</fit-text></div>`);

define('tool-link',`<style>:host{display:flex;flex-direction:column;align-items:center;gap:9px;flex:none;color:#2a22b8}.i{height:24px;display:flex;align-items:center}</style>
<div class="i"><slot name="icon"></slot></div><slot></slot>`);

define('server-pane',`<style>:host{display:block;width:413px;flex:none;background:#fcfcff;border-right:1px solid #b7b7ca;box-sizing:content-box;font:12.500px/15px "DejaVu Sans",sans-serif;color:#222}
.e{display:flex;justify-content:flex-end;padding:3px 1px 0 0}.t{display:flex;align-items:center;height:30px;margin:5px 0 0 4px;font-size:20.500px;line-height:24px;color:#111}.t fit-text{margin:-1px 5px 0 5px}.t :last-child{margin-top:-2px}
.k{display:flex;gap:9px;margin:10px 0 0 38px}.l{margin:5px 0 0 33px;font-size:12px}
.d{display:flex;align-items:center;margin:9px 0 0 71px;height:22px;font-size:14.500px}.d fit-text{margin-left:5px}.d svg-icon:first-child{margin-top:-8px}i{font-style:normal;font-weight:bold;color:#22f}u{text-decoration:none;color:#e22;font-weight:bold}</style>
<div class="e"><svg-icon name="exp"></svg-icon></div>
<div class="t"><svg-icon name="pc"></svg-icon><fit-text w="162">My LDAP Server</fit-text><svg-icon name="clock"></svg-icon></div>
<div class="k">
<tool-link><svg-icon slot="icon" name="schema"></svg-icon><fit-text w="57">esquema</fit-text></tool-link>
<tool-link><svg-icon slot="icon" name="search"></svg-icon><fit-text w="42">buscar</fit-text></tool-link>
<tool-link><svg-icon slot="icon" name="refresh" w="25" h="22"></svg-icon><fit-text w="56">refrescar</fit-text></tool-link>
<tool-link><svg-icon slot="icon" name="info"></svg-icon><fit-text w="24">info</fit-text></tool-link>
<tool-link><svg-icon slot="icon" name="imp"></svg-icon><fit-text w="54">importar</fit-text></tool-link>
<tool-link><svg-icon slot="icon" name="db"></svg-icon><fit-text w="53">exportar</fit-text></tool-link>
<tool-link><svg-icon slot="icon" name="exit"></svg-icon><fit-text w="26">salir</fit-text></tool-link></div>
<div class="l"><fit-text w="272">Logeado como: cn=admin,dc=micentro,dc=edu</fit-text></div>
<div class="d"><svg-icon name="tree"></svg-icon><svg-icon name="globe"></svg-icon><fit-text w="92">dc<i>=</i>micentro</fit-text><fit-text style="margin-left:1px" w="7"><u>,</u></fit-text><fit-text style="margin-left:1px" w="53">dc<i>=</i>edu</fit-text></div>`);

define('entry-title',`<style>:host{display:block;margin:7px 0 0 7px;width:681px;height:91px;box-sizing:border-box;border:1px solid #000;background:#00008b;color:#f0f0ff;font:11px/15px "DejaVu Sans",sans-serif}
.a{height:50px;border-bottom:2px solid #000030;display:flex;align-items:center;justify-content:center;font-size:21px;line-height:26px;box-sizing:border-box;padding-top:2px}
.b{display:flex;justify-content:center;margin-top:5px}b{color:#fff}.b fit-text+fit-text{margin-left:11px}.b+.b{margin-top:0}</style>
<div class="a"><fit-text w="142">dc=micentro</fit-text></div>
<div class="b"><fit-text w="153">Servidor: <b>My LDAP Server</b></fit-text><fit-text w="245">Nombre distinguido: <b>dc=micentro,dc=edu</b></fit-text></div>
<div class="b"><fit-text w="152">plantilla: <b>Predeterminado</b></fit-text></div>`);

define('action-item',`<style>:host{display:flex;align-items:center;position:relative;color:#1c17b4}:host([note]){color:#939393}
.i{width:33px;flex:none;height:100%;display:flex;align-items:center;justify-content:center;box-sizing:border-box;padding-bottom:4px;margin-right:2px}</style><div class="i"><slot name="icon"></slot></div><slot></slot>`);

define('action-list',`<style>:host{display:grid;grid-template-columns:291px 1fr;grid-template-rows:32px 33px 29px 27px 27.500px 27.500px 27px;margin:15px 0 0 7px;font:15.500px/20px "DejaVu Sans",sans-serif}
.w{grid-column:1/3}.u{position:absolute;left:30px;top:23px}.n{font-size:15px}.dn{margin:0 -3px 0 0}</style>
<action-item><svg-icon slot="icon" name="refresh" w="19" h="17"></svg-icon><fit-text w="75">Refrescar</fit-text></action-item>
<action-item><svg-icon slot="icon" name="tools"></svg-icon><fit-text w="206">Mostrar atributos internos</fit-text></action-item>
<action-item><svg-icon slot="icon" name="swiss"></svg-icon><fit-text w="135">Cambiar Plantilla</fit-text></action-item>
<action-item><svg-icon class="dn" slot="icon" name="db" w="27" h="26"></svg-icon><fit-text w="69">Exportar</fit-text></action-item>
<action-item><svg-icon slot="icon" name="copy"></svg-icon><fit-text w="145">Copiar este objeto</fit-text></action-item>
<action-item><svg-icon slot="icon" name="trash"></svg-icon><fit-text w="143">Borrar este objeto</fit-text></action-item>
<action-item><svg-icon slot="icon" name="ren"></svg-icon><fit-text w="88">Renombrar</fit-text></action-item>
<action-item><svg-icon slot="icon" name="cmp"></svg-icon><fit-text w="216">Comparar con otra entrada</fit-text></action-item>
<action-item><svg-icon slot="icon" name="gold"></svg-icon><fit-text w="157">Crear un objeto hijo</fit-text><svg-icon class="u" name="stroke"></svg-icon></action-item>
<action-item><svg-icon slot="icon" name="add"></svg-icon><fit-text w="119">Añadir atributo</fit-text></action-item>
<action-item note class="w n"><svg-icon slot="icon" name="lamp"></svg-icon><fit-text w="527">Nota: para borrar un atributo, borre su atributo y haga click en guardar.</fit-text></action-item>
<action-item note class="w n"><svg-icon slot="icon" name="lamp"></svg-icon><fit-text w="498">Nota: Para ver el esquema de un atributo, haga click en su nombre.</fit-text></action-item>`);

define('attr-head',`<style>:host{display:flex;align-items:center;justify-content:space-between;height:31px;background:#dfdfdf;padding-left:5px;font:10.500px/11px "DejaVu Sans",sans-serif;color:#333}b{font-size:13.500px;color:#000;margin-top:-2px}div{display:flex;margin-top:-2px}</style><b><slot></slot></b><div><slot name="hints"></slot></div>`);

define('attr-form',`<style>:host{display:block;width:582px;margin:24px 0 0 57px;font:12px/15px "DejaVu Sans",sans-serif;color:#111}
.v{display:flex;justify-content:space-between;margin:10px 0 0 94px}.f{width:400px;height:22px;background:#fff;padding:0 0 2px 3px;box-sizing:border-box;display:flex;align-items:center;font:16px/20px "Noto Sans",sans-serif}
.r{margin:13px 0 16px 94px}.r a{color:#1c17b4}.i{margin:11px 0 0 94px;width:405px;height:26px;box-sizing:border-box;background:#fff;border:2px solid;border-color:#8d8d92 #ddd #ddd #8d8d92;display:flex;align-items:center;padding-left:3px;font:16px/20px "Noto Sans",sans-serif}
.d{border-bottom:1px dotted #333}</style>
<attr-head>dc<fit-text slot="hints" class="d" w="50">requerido</fit-text><fit-text slot="hints" w="7">, </fit-text><fit-text slot="hints" class="d" w="17">rdn</fit-text></attr-head>
<div class="v"><div class="f"><fit-text w="64">micentro</fit-text></div><span>*</span></div>
<div class="r"><fit-text w="68">(<a>renombrar</a>)</fit-text></div>
<attr-head>o<fit-text slot="hints" class="d" w="50">requerido</fit-text></attr-head>
<div class="i"><fit-text w="69">trassierra</fit-text></div>`);

define('entry-pane',`<style>:host{display:block;flex:1;background:#fcfcff;min-width:0}</style><entry-title></entry-title><action-list></action-list><attr-form></attr-form>`);

define('web-browser',`<style>:host{display:flex;flex-direction:column;flex:1;min-width:0;background:#fff;overflow:hidden}.b{display:flex;flex:1;min-height:0;margin:0 11px 0 12px}</style>
<tab-strip></tab-strip><nav-bar></nav-bar><page-header></page-header><div class="b"><server-pane></server-pane><entry-pane></entry-pane></div>`);

define('status-bar',`<style>:host{display:flex;height:31px;box-sizing:border-box;background:#f0f0f0;border-bottom:1px solid #5b5e60;align-items:center;justify-content:flex-end;gap:4px;padding-right:2px;font:14px "Open Sans",sans-serif;color:#111;border-image:linear-gradient(90deg,#3f8d9c 0 58px,#5b5e60 58px 536px,#aaa 536px 780px,#555 780px) 1}
svg-icon[name=grip]{align-self:flex-end;margin:0 0 4px 5px}</style>
<svg-icon name="hdd"></svg-icon><svg-icon name="cd"></svg-icon><svg-icon name="aud"></svg-icon><svg-icon name="net2" w="22"></svg-icon><svg-icon name="usb"></svg-icon><svg-icon name="folder"></svg-icon><svg-icon name="disp"></svg-icon><svg-icon name="rec" w="22"></svg-icon><svg-icon name="cpu"></svg-icon><svg-icon name="mouse"></svg-icon><svg-icon name="kbd"></svg-icon><fit-text w="99">CTRL DERECHA</fit-text><svg-icon name="grip"></svg-icon>`);

define('vm-window',`<style>:host{display:flex;flex-direction:column;width:1208px;height:857px;background:#fff;overflow:hidden}.d{display:flex;height:727px;min-height:0}title-bar,menu-bar,top-panel,status-bar{flex:none}</style>
<title-bar></title-bar><menu-bar></menu-bar><top-panel></top-panel><div class="d"><app-dock></app-dock><web-browser></web-browser></div><status-bar></status-bar>`);
fits.forEach(f=>f.fit());
</script>
</body>
</html>
